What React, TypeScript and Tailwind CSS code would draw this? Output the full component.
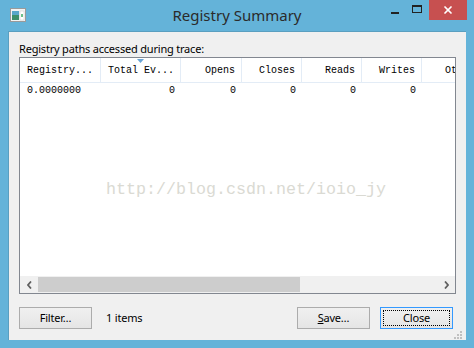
import { X } from "lucide-react";

const columns = [
  { name: "Registry...", w: "w-[81px]", align: "text-left pl-[7px]", value: "0.0000000" },
  { name: "Total Ev...", w: "w-[80px]", align: "text-right pr-[6px]", value: "0", sorted: true },
  { name: "Opens", w: "w-[61px]", align: "text-right pr-[6px]", value: "0" },
  { name: "Closes", w: "w-[60px]", align: "text-right pr-[6px]", value: "0" },
  { name: "Reads", w: "w-[60px]", align: "text-right pr-[6px]", value: "0" },
  { name: "Writes", w: "w-[60px]", align: "text-right pr-[6px]", value: "0" },
  { name: "Ot", w: "w-[60px]", align: "text-left pl-[23px]", value: "" },
];

function AppIcon() {
  return (
    <svg width="16" height="14" viewBox="0 0 16 14">
      <rect x="0.5" y="0.5" width="15" height="13" fill="#f4f4f4" stroke="#9a9a9a" />
      <rect x="2" y="3" width="7" height="9" fill="#3f8f6a" />
      <rect x="2" y="3" width="7" height="4" fill="#5aa7c9" />
      <rect x="10" y="3" width="4" height="9" fill="#ffffff" stroke="#c8c8c8" strokeWidth="0.5" />
      <rect x="11" y="6" width="2" height="3" fill="#6cc08a" />
    </svg>
  );
}

export default function App() {
  return (
    <div className="w-[474px] h-[348px] bg-[#64b3d9] flex flex-col font-['Noto_Sans',sans-serif] overflow-hidden">
      {/* title bar */}
      <div className="h-[31px] flex shrink-0">
        <div className="w-[90px] pl-[10px] pt-[8px]">
          <AppIcon />
        </div>
        <div className="flex-1 text-center text-[15px] leading-[20px] pt-[5px] text-[#2b2b2b]">Registry Summary</div>
        <div className="w-[90px] flex items-start justify-end pr-[7px]">
          <div className="w-[26px] h-[20px] flex items-center justify-center">
            <div className="w-[8px] h-[2px] bg-[#222] mt-[6px]" />
          </div>
          <div className="w-[26px] h-[20px] flex items-center justify-center">
            <div className="w-[10px] h-[8px] border border-t-[2px] border-[#222] -mt-[2px]" />
          </div>
          <div className="w-[45px] h-[20px] bg-[#c75050] flex items-center justify-center">
            <X size={12} strokeWidth={3.5} color="#ffffff" />
          </div>
        </div>
      </div>

      {/* client area */}
      <div className="mx-[8px] h-[309px] bg-[#f0f0f0] border-t border-l border-[#5a9fc0] flex flex-col pl-[10px] pr-[10px]">
        <div className="mt-[9px] h-[16px] text-[11px] tracking-[-0.2px] leading-[16px] text-black">Registry paths accessed during trace:</div>

        <div className="h-[237px] border border-[#828790] bg-white flex flex-col overflow-hidden">
          <div className="flex h-[25px] border-b border-[#e3ecf6] font-['Liberation_Mono',monospace] text-[10px] text-black shrink-0">
            {columns.map((c) => (
              <div key={c.name} className={`relative shrink-0 ${c.w} ${c.align} border-r border-[#e3ecf6] leading-[25px] whitespace-nowrap`}>
                {c.sorted && (
                  <svg className="absolute left-[36px] top-[1px]" width="7" height="4" viewBox="0 0 7 4">
                    <path d="M0 0H7L3.5 4Z" fill="#6aa5d6" />
                  </svg>
                )}
                {c.name}
              </div>
            ))}
          </div>
          <div className="flex h-[16px] font-['Liberation_Mono',monospace] text-[10px] text-black shrink-0">
            {columns.map((c) => (
              <div key={c.name} className={`shrink-0 ${c.w} ${c.align} leading-[16px] whitespace-nowrap`}>
                {c.value}
              </div>
            ))}
          </div>
          <div className="flex-1 flex items-center pl-[86px] pt-[4px]">
            <span className="font-['Liberation_Mono',monospace] text-[16.67px] text-[#dadad3]">http://blog.csdn.net/ioio_jy</span>
          </div>
          <div className="h-[17px] bg-[#f0f0f0] flex items-center shrink-0">
            <div className="w-[18px] flex justify-center">
              <svg width="5" height="8" viewBox="0 0 5 8">
                <path d="M4 0.5L1 4L4 7.5" fill="none" stroke="#606060" strokeWidth="1.8" />
              </svg>
            </div>
            <div className="w-[262px] h-[15px] bg-[#cdcdcd]" />
            <div className="flex-1" />
            <div className="w-[18px] flex justify-center">
              <svg width="5" height="8" viewBox="0 0 5 8">
                <path d="M1 0.5L4 4L1 7.5" fill="none" stroke="#606060" strokeWidth="1.8" />
              </svg>
            </div>
          </div>
        </div>

        <div className="mt-[13px] mr-[3px] flex items-center text-[11px] tracking-[-0.2px]">
          <button className="w-[73px] h-[22px] border border-[#acacac] bg-gradient-to-b from-[#f0f0f0] to-[#e5e5e5] text-black leading-[18px]">
            Filter…
          </button>
          <span className="ml-[14px] text-black">1 items</span>
          <div className="flex-1" />
          <button className="w-[73px] h-[22px] border border-[#acacac] bg-gradient-to-b from-[#f0f0f0] to-[#e5e5e5] text-black leading-[18px]">
            <span className="underline">S</span>ave…
          </button>
          <button className="ml-[10px] w-[73px] h-[22px] border border-[#3399ff] bg-gradient-to-b from-[#f0f0f0] to-[#e5e5e5] text-black p-[2px]">
            <div className="w-full h-full border border-dotted border-black leading-[14px]">Close</div>
          </button>
        </div>
        <div className="flex justify-end mr-[-6px] mt-[2px]">
          <svg width="8" height="8" viewBox="0 0 8 8">
            <rect x="6" y="0" width="2" height="2" fill="#c0c0c0" />
            <rect x="3" y="3" width="2" height="2" fill="#c0c0c0" />
            <rect x="6" y="3" width="2" height="2" fill="#c0c0c0" />
            <rect x="0" y="6" width="2" height="2" fill="#c0c0c0" />
            <rect x="3" y="6" width="2" height="2" fill="#c0c0c0" />
            <rect x="6" y="6" width="2" height="2" fill="#c0c0c0" />
          </svg>
        </div>
      </div>
    </div>
  );
}
